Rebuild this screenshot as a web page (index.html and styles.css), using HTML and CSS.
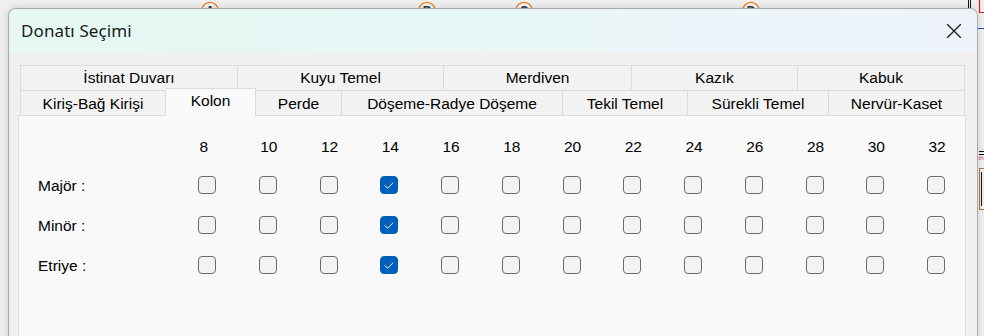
FILE: index.html
```html
<!DOCTYPE html>
<html lang="tr">
<head>
<meta charset="utf-8">
<title>Donatı Seçimi</title>
<link rel="stylesheet" href="styles.css">
</head>
<body>
<div class="desk">
  <svg class="cad" width="984" height="336" viewBox="0 0 984 336">
    <g class="axis">
      <circle cx="210" cy="10.5" r="8.2"/>
      <circle cx="427" cy="10.5" r="8.2"/>
      <circle cx="524" cy="10.5" r="8.2"/>
      <circle cx="751" cy="10.5" r="8.2"/>
    </g>
    <g class="axis-label">
      <text x="210" y="15">A</text>
      <text x="427" y="15">B</text>
      <text x="524" y="15">C</text>
      <text x="751" y="15">D</text>
    </g>
    <line x1="968.5" y1="0" x2="968.5" y2="10" class="blk"/>
    <line x1="970.5" y1="0" x2="970.5" y2="10" class="blk"/>
    <polyline points="979.5,0 979.5,12.5 984,12.5" class="red"/>
    <line x1="978" y1="28.5" x2="984" y2="28.5" class="blue"/>
    <line x1="979" y1="151.5" x2="984" y2="151.5" class="blk"/>
    <line x1="979" y1="154.5" x2="984" y2="154.5" class="blk"/>
    <text x="978.6" y="160" class="redtxt">th</text>
    <rect x="979.5" y="168.5" width="8" height="41" class="brown"/>
    <line x1="981.5" y1="172" x2="981.5" y2="206" class="blk"/>
  </svg>

  <div class="dialog">
    <div class="titlebar">
      <span class="title">Donatı Seçimi</span>
      <span class="close" aria-label="Kapat">
        <svg width="16" height="16" viewBox="0 0 16 16"><path d="M1.2 1.2 L14.8 14.8 M14.8 1.2 L1.2 14.8"/></svg>
      </span>
    </div>

    <div class="dbody">
      <div class="tabs">
        <div class="tabrow row-back">
          <div class="tab">İstinat Duvarı</div>
          <div class="tab">Kuyu Temel</div>
          <div class="tab">Merdiven</div>
          <div class="tab">Kazık</div>
          <div class="tab">Kabuk</div>
        </div>
        <div class="tabrow row-front">
          <div class="tab">Kiriş-Bağ Kirişi</div>
          <div class="tab selected">Kolon</div>
          <div class="tab">Perde</div>
          <div class="tab">Döşeme-Radye Döşeme</div>
          <div class="tab">Tekil Temel</div>
          <div class="tab">Sürekli Temel</div>
          <div class="tab">Nervür-Kaset</div>
        </div>
      </div>

      <div class="panel">
        <div class="grid">
          <div class="corner"></div>
          <div class="num">8</div><div class="num">10</div><div class="num">12</div><div class="num">14</div><div class="num">16</div><div class="num">18</div><div class="num">20</div><div class="num">22</div><div class="num">24</div><div class="num">26</div><div class="num">28</div><div class="num">30</div><div class="num">32</div>

          <div class="label">Majör :</div>
          <span class="cb"></span><span class="cb"></span><span class="cb"></span><span class="cb on"><svg viewBox="0 0 18 18"><path d="M4.5 9.8 L7.6 12.6 L13.4 6.6"/></svg></span><span class="cb"></span><span class="cb"></span><span class="cb"></span><span class="cb"></span><span class="cb"></span><span class="cb"></span><span class="cb"></span><span class="cb"></span><span class="cb"></span>

          <div class="label">Minör :</div>
          <span class="cb"></span><span class="cb"></span><span class="cb"></span><span class="cb on"><svg viewBox="0 0 18 18"><path d="M4.5 9.8 L7.6 12.6 L13.4 6.6"/></svg></span><span class="cb"></span><span class="cb"></span><span class="cb"></span><span class="cb"></span><span class="cb"></span><span class="cb"></span><span class="cb"></span><span class="cb"></span><span class="cb"></span>

          <div class="label">Etriye :</div>
          <span class="cb"></span><span class="cb"></span><span class="cb"></span><span class="cb on"><svg viewBox="0 0 18 18"><path d="M4.5 9.8 L7.6 12.6 L13.4 6.6"/></svg></span><span class="cb"></span><span class="cb"></span><span class="cb"></span><span class="cb"></span><span class="cb"></span><span class="cb"></span><span class="cb"></span><span class="cb"></span><span class="cb"></span>
        </div>
      </div>
    </div>
  </div>
</div>
</body>
</html>
```
FILE: styles.css
```css
html, body {
  margin: 0;
  padding: 0;
}
body {
  width: 984px;
  height: 336px;
  overflow: hidden;
  background: #efefef;
  font-family: "Liberation Sans", Arial, sans-serif;
  color: #000;
}
.desk {
  position: relative;
  width: 984px;
  height: 336px;
  overflow: hidden;
  background: #efefef;
}
.cad {
  position: absolute;
  left: 0;
  top: 0;
}
.cad .axis circle {
  fill: #f4f4f4;
  stroke: #ee7a12;
  stroke-width: 1.2;
}
.cad .axis-label text {
  font-family: "Liberation Sans", Arial, sans-serif;
  font-size: 12px;
  font-weight: bold;
  fill: #2a3440;
  text-anchor: middle;
}
.cad .blk { stroke: #111; stroke-width: 1; fill: none; }
.cad .red { stroke: #e0181b; stroke-width: 1.2; fill: none; }
.cad .blue { stroke: #1f3fe0; stroke-width: 1; }
.cad .redtxt { font-family: "Liberation Sans", Arial, sans-serif; font-size: 6px; fill: #e04040; }
.cad .brown { fill: none; stroke: #b0753a; stroke-width: 1; }

.dialog {
  position: relative;
  z-index: 1;
  box-sizing: border-box;
  margin: 8px 0 0 8px;
  width: 970px;
  height: 340px;
  border: 1px solid #a9a9a9;
  border-bottom: none;
  border-radius: 8px 8px 0 0;
  background: #f0f0f0;
  overflow: hidden;
  box-shadow: 0 0 7px rgba(0, 0, 0, 0.14);
}
.titlebar {
  display: flex;
  align-items: center;
  height: 43px;
  padding: 0 15px 0 12px;
  background: linear-gradient(90deg, #e5f8f3 0%, #e6f7f5 45%, #ebf5f9 70%, #eef3fa 100%);
}
.title {
  font-family: "Noto Sans", "Segoe UI", sans-serif;
  font-size: 17px;
  color: #1a1a1a;
  letter-spacing: 0.1px;
}
.close {
  margin-left: auto;
  display: flex;
  width: 16px;
  height: 16px;
}
.close path {
  stroke: #1b1b1b;
  stroke-width: 1.3;
  fill: none;
}

.dbody {
  padding: 13px 11px 0 9px;
}
.tabs {
  margin: 0 2px;
  font-size: 15.5px;
}
.tabrow {
  display: grid;
  height: 25px;
  border-left: 1px solid #dcdcdc;
}
.row-back {
  grid-template-columns: 217px 206px 188px 166px 167px;
}
.row-front {
  grid-template-columns: 145px 90px 86px 221px 125px 141px 136px;
}
.tab {
  box-sizing: border-box;
  display: flex;
  align-items: center;
  justify-content: center;
  height: 25px;
  line-height: 18px;
  padding-bottom: 1px;
  background: #f2f2f2;
  border-top: 1px solid #dcdcdc;
  border-right: 1px solid #dcdcdc;
  white-space: nowrap;
}
.row-front .tab {
  padding-top: 2px;
  padding-bottom: 0;
}
.tab.selected {
  position: relative;
  z-index: 1;
  margin-top: -2px;
  height: 28px;
  padding: 0 0 3px;
  background: #f9f9f9;
}

.panel {
  box-sizing: border-box;
  height: 240px;
  border: 1px solid #dcdcdc;
  background: #f9f9f9;
  padding: 22px 0 0 19px;
  font-size: 15.5px;
}
.grid {
  display: grid;
  grid-template-columns: 160px repeat(13, 60.75px);
  grid-template-rows: 26.5px repeat(3, 40px);
  align-items: center;
}
.num {
  align-self: start;
  line-height: 18px;
  padding-left: 1.5px;
}
.label {
  line-height: 18px;
  margin-top: 3px;
}
.cb {
  box-sizing: border-box;
  display: block;
  width: 18px;
  height: 18px;
  border: 1px solid #6c6c6c;
  border-radius: 4px;
  background: #f3f3f3;
}
.cb.on {
  border-color: #005fb8;
  background: #005fb8;
}
.cb svg {
  display: block;
  width: 16px;
  height: 16px;
}
.cb svg path {
  fill: none;
  stroke: #ffffff;
  stroke-width: 1.1;
  stroke-linecap: round;
  stroke-linejoin: round;
}
```
